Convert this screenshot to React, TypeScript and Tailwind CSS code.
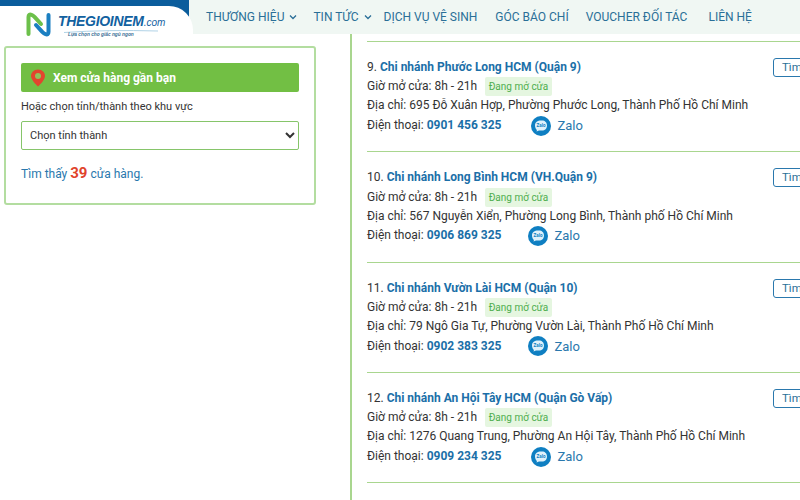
import React from "react";

const stores = [
  { n: "9.", name: "Chi nhánh Phước Long HCM (Quận 9)", addr: "Địa chỉ: 695 Đỗ Xuân Hợp, Phường Phước Long, Thành Phố Hồ Chí Minh", phone: "0901 456 325", gap: "ml-[30px]" },
  { n: "10.", name: "Chi nhánh Long Bình HCM (VH.Quận 9)", addr: "Địa chỉ: 567 Nguyễn Xiển, Phường Long Bình, Thành phố Hồ Chí Minh", phone: "0906 869 325", gap: "ml-[27px]" },
  { n: "11.", name: "Chi nhánh Vườn Lài HCM (Quận 10)", addr: "Địa chỉ: 79 Ngô Gia Tự, Phường Vườn Lài, Thành Phố Hồ Chí Minh", phone: "0902 383 325", gap: "ml-[27px]" },
  { n: "12.", name: "Chi nhánh An Hội Tây HCM (Quận Gò Vấp)", addr: "Địa chỉ: 1276 Quang Trung, Phường An Hội Tây, Thành Phố Hồ Chí Minh", phone: "0909 234 325", gap: "ml-[30px]" },
];

function Chevron() {
  return (
    <svg width="8" height="6" viewBox="0 0 8 6" fill="none" stroke="#2a6f97" strokeWidth="1.3" className="ml-[5px]">
      <path d="M1 1.500 4 4.500 7 1.500" />
    </svg>
  );
}

function Logo() {
  return (
    <div className="flex items-start pl-[26px] pt-[6px]">
      <svg width="25" height="25" viewBox="0 0 25 25" fill="none" strokeLinecap="round" strokeLinejoin="round">
        <path d="M2.500 22V5Q2.500 1.800 5.500 2.800Q7 3.300 8.500 4.800L15 12" stroke="#6cc04a" strokeWidth="4" />
        <path d="M22.500 3V20Q22.500 23.200 19.500 22.200Q18 21.700 16.500 20.200L10 13" stroke="#1b7fc1" strokeWidth="4" />
      </svg>
      <div className="ml-[7px] mt-[2px] relative">
        <div className="font-['Liberation_Sans',sans-serif] italic font-bold text-[#12619f] text-[14px] leading-[14px] tracking-[-0.3px] whitespace-nowrap">
          THEGIOINEM<span className="text-[10px] font-normal tracking-normal">.com</span>
        </div>
        <svg width="108" height="3" viewBox="0 0 108 3" fill="none" className="block">
          <path d="M6 2.500Q50 -0.500 100 1" stroke="#9cc6e0" strokeWidth="0.800" />
        </svg>
        <div className="font-['Liberation_Sans',sans-serif] italic font-bold text-[#3a6f94] text-[4.800px] leading-[6px] -mt-[1px] pl-[10px] whitespace-nowrap">
          Lựa chọn cho giấc ngủ ngon
        </div>
      </div>
    </div>
  );
}

function Zalo() {
  return (
    <svg width="20" height="20" viewBox="0 0 20 20">
      <circle cx="10" cy="10" r="10" fill="#0f7fc2" />
      <path d="M4 9.500C4 6 6.500 4.500 10 4.500h1c3 0 5 2 5 5s-2 5-5 5H8l-2.500 1L6 14c-1.300-1-2-2.700-2-4.500Z" fill="#dff1fb" />
      <text x="10" y="11.300" textAnchor="middle" fontSize="4.500" fontWeight="700" fill="#0f7fc2" fontFamily="Roboto, sans-serif">Zalo</text>
    </svg>
  );
}

function Pin() {
  return (
    <svg width="16" height="18" viewBox="0 0 16 18">
      <path d="M8 0.500C3.800 0.500 1 3.500 1 7c0 4.500 7 10.500 7 10.500S15 11.500 15 7c0-3.500-2.800-6.500-7-6.500Z" fill="#e2452e" />
      <circle cx="8" cy="7" r="3" fill="#8fc45a" />
    </svg>
  );
}

export default function App() {
  const nav = [
    { t: "THƯƠNG HIỆU", c: true, cls: "" },
    { t: "TIN TỨC", c: true, cls: "ml-[16px]" },
    { t: "DỊCH VỤ VỆ SINH", c: false, cls: "ml-[12px]" },
    { t: "GÓC BÁO CHÍ", c: false, cls: "ml-[18px]" },
    { t: "VOUCHER ĐỐI TÁC", c: false, cls: "ml-[17px]" },
    { t: "LIÊN HỆ", c: false, cls: "ml-[21px]" },
  ];
  return (
    <div className="w-[800px] h-[500px] overflow-hidden bg-white font-['Roboto',sans-serif] text-[12px] text-[#333]">
      <header className="h-[34px] bg-[#f0f7f3] flex">
        <div className="w-[190px] h-[34px] shrink-0">
          <div className="w-[189px] h-[34px] bg-[#0b5d9c]">
            <div className="w-[193px] h-[28px] translate-y-[6px] bg-white rounded-tr-[24px]">
              <Logo />
            </div>
          </div>
        </div>
        <nav className="flex items-center pl-[16px] text-[#2a6f97] text-[12px] whitespace-nowrap h-[33px]">
          {nav.map((i) => (
            <div key={i.t} className={`flex items-center ${i.cls}`}>
              {i.t}
              {i.c && <Chevron />}
            </div>
          ))}
        </nav>
      </header>
      <div className="flex h-[466px]">
        <aside className="w-[350px] shrink-0 pl-[4px] pt-[12px]">
          <div className="w-[312px] h-[159px] border-2 border-[#b3dda0] rounded-[3px] px-[15px] pt-[15px]">
            <div className="h-[29px] bg-[#72bf44] rounded-[2px] flex items-center pl-[9px] text-white font-bold text-[12px]">
              <Pin />
              <span className="ml-[7px]">Xem cửa hàng gần bạn</span>
            </div>
            <p className="mt-[7px] text-[11px] leading-[15px] text-[#333]">Hoặc chọn tỉnh/thành theo khu vực</p>
            <select className="mt-[7px] w-full h-[29px] border border-[#86c56a] rounded-[2px] bg-white px-[4px] text-[11px] text-[#333]">
              <option>Chọn tỉnh thành</option>
            </select>
            <p className="mt-[12px] text-[#2a78ad] text-[12px] leading-[22px]">
              Tìm thấy <span className="text-[#e0432b] font-bold text-[15px]">39</span> cửa hàng.
            </p>
          </div>
        </aside>
        <main className="w-[450px] shrink-0 border-l-2 border-[#a9d68f] pl-[15px] pt-[7px] overflow-hidden">
          <div className="w-[470px] border-t border-[#a9d68f]">
            {stores.map((s) => (
              <article key={s.n} className="relative h-[110.300px] border-b border-[#a9d68f] pt-[16px] text-[12px] leading-[19.200px] text-[#333] whitespace-nowrap">
                <button className="absolute left-[406px] top-[16px] w-[70px] h-[19px] border border-[#2a78ad] rounded-[3px] bg-white text-[11.500px] text-[#2a6f97] text-left pl-[8px] leading-[17px]">
                  Tìm
                </button>
                <div>
                  {s.n} <a className="font-bold text-[#1b6fa8]">{s.name}</a>
                </div>
                <div className="flex items-center">
                  Giờ mở cửa: 8h - 21h
                  <span className="ml-[8px] h-[19px] px-[3.500px] bg-[#e5f6e0] rounded-[2px] text-[#4fae4f] text-[10px] leading-[19px]">Đang mở cửa</span>
                </div>
                <div>{s.addr}</div>
                <div className="flex items-center">
                  <span>
                    Điện thoại: <b className="text-[#1b6fa8]">{s.phone}</b>
                  </span>
                  <span className={`${s.gap} flex items-center text-[#2a78ad] text-[13px]`}>
                    <Zalo />
                    <span className="ml-[6px]">Zalo</span>
                  </span>
                </div>
              </article>
            ))}
          </div>
        </main>
      </div>
    </div>
  );
}
